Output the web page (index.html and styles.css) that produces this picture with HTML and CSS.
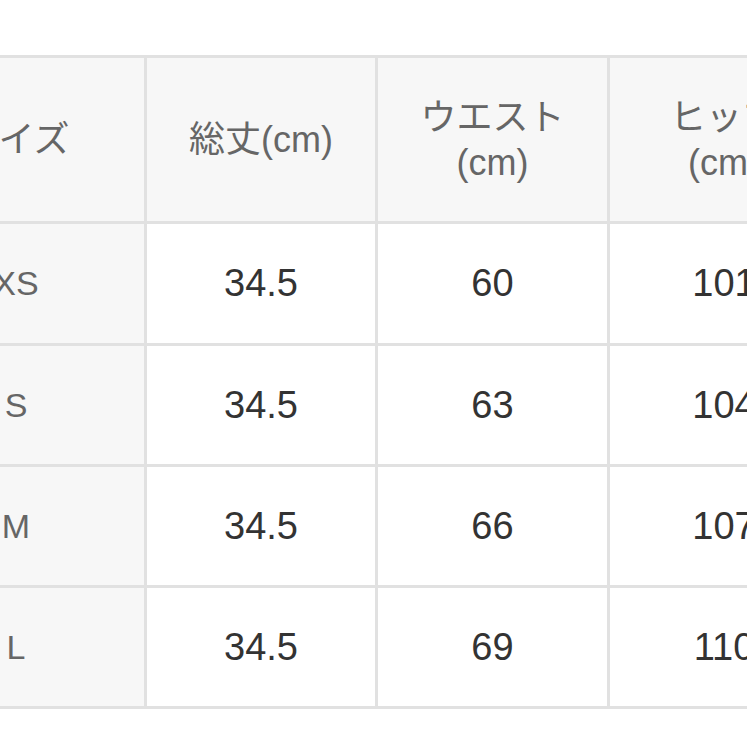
FILE: index.html
```html
<!DOCTYPE html>
<html lang="ja">
<head>
<meta charset="utf-8">
<title>サイズ表</title>
<link rel="stylesheet" href="styles.css">
</head>
<body>
<div class="viewport">
  <div class="size-table">
    <div class="cell head">サイズ</div>
    <div class="cell head">総丈(cm)</div>
    <div class="cell head">ウエスト<br>(cm)</div>
    <div class="cell head">ヒップ<br>(cm)</div>

    <div class="cell label">XS</div>
    <div class="cell value">34.5</div>
    <div class="cell value">60</div>
    <div class="cell value">101</div>

    <div class="cell label">S</div>
    <div class="cell value">34.5</div>
    <div class="cell value">63</div>
    <div class="cell value">104</div>

    <div class="cell label">M</div>
    <div class="cell value">34.5</div>
    <div class="cell value">66</div>
    <div class="cell value">107</div>

    <div class="cell label">L</div>
    <div class="cell value">34.5</div>
    <div class="cell value">69</div>
    <div class="cell value">110</div>
  </div>
</div>
</body>
</html>
```
FILE: styles.css
```css
html, body {
  margin: 0;
  padding: 0;
  background: #ffffff;
  overflow: hidden;
}

.viewport {
  width: 747px;
  height: 747px;
  overflow: hidden;
  padding-top: 55px;
  box-sizing: border-box;
}

.size-table {
  display: grid;
  grid-template-columns: 256px 228px 229px 228px;
  grid-template-rows: 163px 119px 118px 118px 118px;
  gap: 3px;
  padding: 3px;
  background: #e1e1e1;
  width: max-content;
  margin-left: -115px;
  font-family: "Liberation Sans", "Noto Sans CJK JP", sans-serif;
}

.cell {
  display: flex;
  align-items: center;
  justify-content: center;
  text-align: center;
}

.head {
  background: #f7f7f7;
  color: #666666;
  font-size: 36px;
  line-height: 45px;
}

.label {
  background: #f7f7f7;
  color: #666666;
  font-size: 34px;
}

.value {
  background: #ffffff;
  color: #333333;
  font-size: 38px;
}
```
